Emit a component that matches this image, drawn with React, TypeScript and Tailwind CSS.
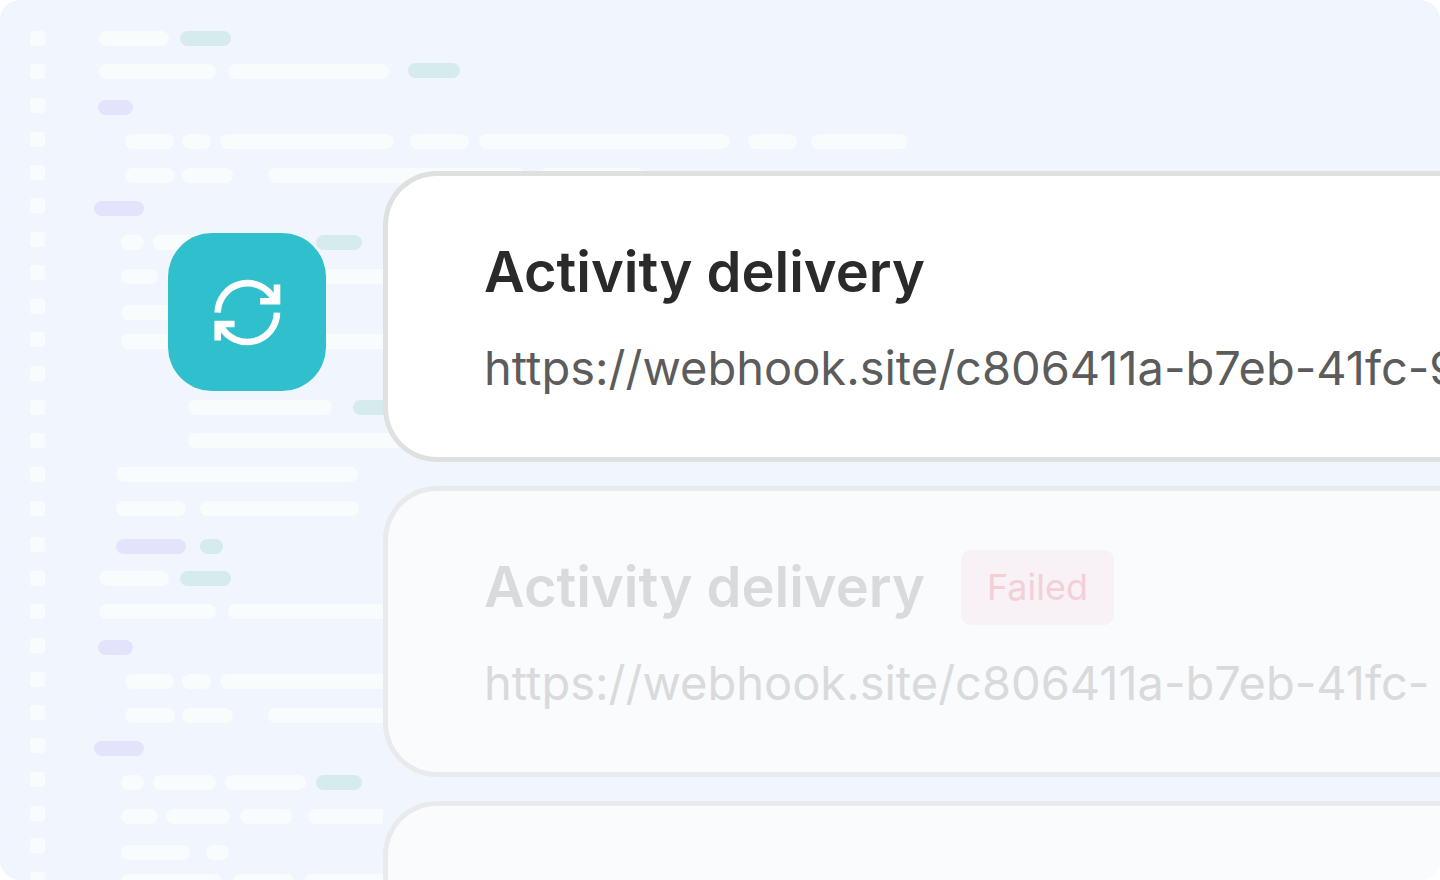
import React from 'react';
import clsx from 'clsx';

type Tone = 'plain' | 'teal' | 'violet';
type Bar = { x: number; w: number; tone?: Tone };
type Line = { y: number; bars: Bar[] };

const toneClass: Record<Tone, string> = {
  plain: 'fill-[#f9fcfd]',
  teal: 'fill-[#d5ebed]',
  violet: 'fill-[#e3e4fb]',
};

const gutter = [
  31, 64, 98, 132, 165, 198, 232, 265, 299, 332, 366, 400, 433, 467, 501, 537, 571, 604, 638, 672, 705, 738, 772, 806,
  838, 872,
];

// the first eight lines are drawn again further down the listing
const block: Line[] = [
  { y: 31, bars: [{ x: 99, w: 70 }, { x: 180, w: 51, tone: 'teal' }] },
  { y: 64, bars: [{ x: 99, w: 117 }, { x: 228, w: 161 }] },
  { y: 100, bars: [{ x: 98, w: 35, tone: 'violet' }] },
  {
    y: 134,
    bars: [
      { x: 125, w: 49 },
      { x: 182, w: 29 },
      { x: 220, w: 174 },
      { x: 410, w: 59 },
      { x: 479, w: 251 },
      { x: 748, w: 49 },
      { x: 811, w: 97 },
    ],
  },
  { y: 168, bars: [{ x: 125, w: 50 }, { x: 182, w: 51 }, { x: 268, w: 257 }, { x: 540, w: 104 }] },
  { y: 201, bars: [{ x: 94, w: 50, tone: 'violet' }] },
  {
    y: 235,
    bars: [{ x: 121, w: 23 }, { x: 153, w: 63 }, { x: 225, w: 81 }, { x: 316, w: 46, tone: 'teal' }],
  },
  { y: 269, bars: [{ x: 121, w: 37 }, { x: 166, w: 64 }, { x: 240, w: 52 }] },
];

const middle: Line[] = [
  { y: 63, bars: [{ x: 408, w: 52, tone: 'teal' }] },
  { y: 305, bars: [{ x: 121, w: 69 }, { x: 206, w: 23 }] },
  { y: 334, bars: [{ x: 121, w: 101 }, { x: 233, w: 61 }, { x: 304, w: 90 }] },
  { y: 400, bars: [{ x: 188, w: 144 }, { x: 353, w: 52, tone: 'teal' }] },
  { y: 433, bars: [{ x: 188, w: 260 }] },
  { y: 467, bars: [{ x: 116, w: 242 }] },
  { y: 501, bars: [{ x: 116, w: 70 }, { x: 200, w: 159 }] },
  { y: 539, bars: [{ x: 116, w: 70, tone: 'violet' }, { x: 200, w: 23, tone: 'teal' }] },
  { y: 845, bars: [{ x: 121, w: 69 }, { x: 206, w: 23 }] },
  { y: 874, bars: [{ x: 121, w: 101 }, { x: 233, w: 61 }, { x: 304, w: 90 }] },
];

const lines: Line[] = [...block, ...middle, ...block.map((line) => ({ ...line, y: line.y + 540 }))];

const CodeBackdrop: React.FC = () => (
  <svg className="absolute left-0 top-0" width="960" height="900" aria-hidden="true">
    {gutter.map((y) => (
      <rect key={y} x={30} y={y} width={15} height={15} rx={3} className="fill-[#f9fcfd]" />
    ))}
    {lines.map((line) =>
      line.bars.map((bar) => (
        <rect
          key={`${line.y}-${bar.x}`}
          x={bar.x}
          y={line.y}
          width={bar.w}
          height={15}
          rx={7.5}
          className={toneClass[bar.tone ?? 'plain']}
        />
      )),
    )}
    {/* these two stop square at the edge of the cards */}
    <path
      d="M383 269H315.5a7.5 7.5 0 0 0 0 15H383zM383 809H315.5a7.5 7.5 0 0 0 0 15H383z"
      className="fill-[#f9fcfd]"
    />
  </svg>
);

const SyncIcon: React.FC = () => (
  <svg width="68" height="68" viewBox="-0.4 -0.6 68 68" fill="none" stroke="#fff" strokeWidth="6.6" aria-hidden="true">
    <path d="M4.3 34A29.8 29.8 0 0 1 60.3 20.2" />
    <path d="M63.6 6v16.6H46.8" />
    <path d="M63.6 34A29.8 29.8 0 0 1 7.6 47.8" />
    <path d="M4.3 62V45.4H21.2" />
  </svg>
);

type Delivery = { id: number; title: string; url: string; status?: string; muted?: boolean };

const deliveries: Delivery[] = [
  { id: 1, title: 'Activity delivery', url: 'https://webhook.site/c806411a-b7eb-41fc-9' },
  { id: 2, title: 'Activity delivery', url: 'https://webhook.site/c806411a-b7eb-41fc-', status: 'Failed', muted: true },
  { id: 3, title: '', url: '', muted: true },
];

const DeliveryCard: React.FC<{ delivery: Delivery }> = ({ delivery }) => {
  const { title, url, status, muted } = delivery;

  return (
    <li
      className={clsx(
        'flex h-[291px] shrink-0 flex-col gap-7 overflow-hidden whitespace-nowrap rounded-l-[54px] border-[5px] border-r-0 pl-24 pt-[59px]',
        muted ? 'border-[#e9eaeb] bg-[#fafbfd] text-[#d9dadb]' : 'border-[#dfe0e0] bg-white text-[#2a2a2a]',
      )}
    >
      {title && (
        <div className="flex h-[75px] shrink-0 items-center gap-9">
          <h2 className="text-[56px] font-semibold leading-[75px]">{title}</h2>
          {status && (
            <span className="rounded-[10px] bg-[#f8f1f5] px-[26px] text-[36px] leading-[75px] text-[#f3d0d8]">
              {status}
            </span>
          )}
        </div>
      )}
      {url && <p className={clsx('text-[47px] leading-[60px]', !muted && 'text-[#5c5c5c]')}>{url}</p>}
    </li>
  );
};

const App: React.FC = () => (
  <main className="relative h-screen overflow-hidden rounded-[20px] bg-[#f1f5fd] font-['Inter',sans-serif]">
    <CodeBackdrop />
    <div className="relative flex items-start gap-[57px] pl-[168px] pt-[171px]">
      <div className="mt-[62px] flex size-[158px] shrink-0 items-center justify-center rounded-[44px] bg-[#30bfcd]">
        <SyncIcon />
      </div>
      <ul className="flex min-w-0 flex-1 flex-col gap-6">
        {deliveries.map((delivery) => (
          <DeliveryCard key={delivery.id} delivery={delivery} />
        ))}
      </ul>
    </div>
  </main>
);

export default App;
